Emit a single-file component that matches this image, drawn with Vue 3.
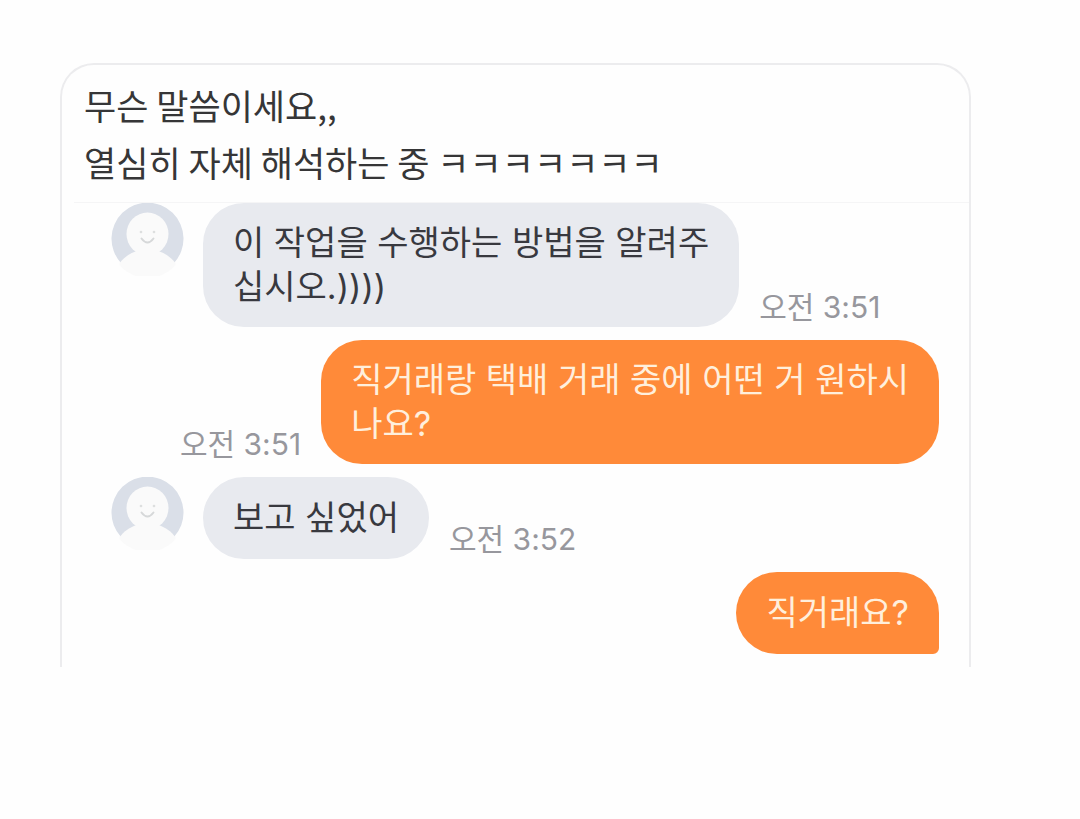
<script setup>
const captions = ['무슨 말씀이세요,,', '열심히 자체 해석하는 중 ㅋㅋㅋㅋㅋㅋㅋ']

const messages = [
  { id: 1, mine: false, text: '이 작업을 수행하는 방법을 알려주\n십시오.))))', time: '오전 3:51' },
  { id: 2, mine: true, text: '직거래랑 택배 거래 중에 어떤 거 원하시\n나요?', time: '오전 3:51' },
  { id: 3, mine: false, text: '보고 싶었어', time: '오전 3:52' },
  { id: 4, mine: true, tail: true, text: '직거래요?', time: '' },
]
</script>

<template>
  <main class="page">
    <article class="card">
      <header class="captions">
        <p v-for="caption in captions" :key="caption">{{ caption }}</p>
      </header>
      <ul class="chat">
        <li v-for="m in messages" :key="m.id" class="row" :class="{ mine: m.mine }">
          <svg v-if="!m.mine" class="avatar" viewBox="0 0 73 73" aria-hidden="true">
            <path d="M10 60A36 36 0 1 1 63 60Z" fill="#dadfe8" />
            <path d="M8 61C13 54 19 50 26 48H47C54 50 60 54 65 61A36 36 0 0 1 8 61Z" fill="#fafafa" />
            <ellipse cx="36.500" cy="31" rx="21" ry="21.500" fill="#fafafa" />
            <circle cx="30" cy="29" r="1.300" fill="#dddfdf" />
            <circle cx="43" cy="29" r="1.300" fill="#dddfdf" />
            <path d="M30.500 35.500Q36.500 43.500 42.500 35.500" fill="none" stroke="#d6d8d9" stroke-width="2" stroke-linecap="round" />
          </svg>
          <p class="bubble" :class="{ tail: m.tail }">{{ m.text }}</p>
          <time v-if="m.time" class="time">{{ m.time }}</time>
        </li>
      </ul>
    </article>
  </main>
</template>

<style>
body {
  margin: 0;
  background: #fefefe;
}
</style>

<style scoped>
.page {
  padding: 63px 109px 60px 60px;
  font-family: "Noto Sans CJK KR", "Noto Sans", sans-serif;
}

.card {
  border: 2px solid #ececee;
  border-bottom: 0;
  border-radius: 34px 34px 0 0;
}

.captions {
  padding: 11px 20px 12px 22px;
  font-size: 35px;
  line-height: 57px;
  color: #363637;
}

.captions p,
.bubble {
  margin: 0;
}

.chat {
  display: flex;
  flex-direction: column;
  gap: 13px;
  margin: 0 0 0 12px;
  padding: 0 30px 13px 37px;
  border-top: 1px solid #f5f5f6;
  list-style: none;
  font-family: Inter, "Noto Sans CJK KR", sans-serif;
}

.row {
  display: flex;
  align-items: flex-end;
}

.mine {
  flex-direction: row-reverse;
}

.avatar {
  flex: none;
  align-self: flex-start;
  width: 73px;
  height: 73px;
  margin-right: 19px;
}

.bubble {
  display: flex;
  align-items: center;
  box-sizing: border-box;
  min-height: 82px;
  padding: 18px 30px;
  border-radius: 41px;
  background: #e8eaef;
  color: #38393f;
  font-size: 34px;
  line-height: 44px;
  white-space: pre-line;
}

.mine .bubble {
  background: #ff8a39;
  color: #ffefdc;
}

.mine .tail {
  border-bottom-right-radius: 6px;
}

.time {
  margin: 0 20px;
  color: #97979d;
  font-size: 30px;
  line-height: 40px;
  white-space: nowrap;
}
</style>
